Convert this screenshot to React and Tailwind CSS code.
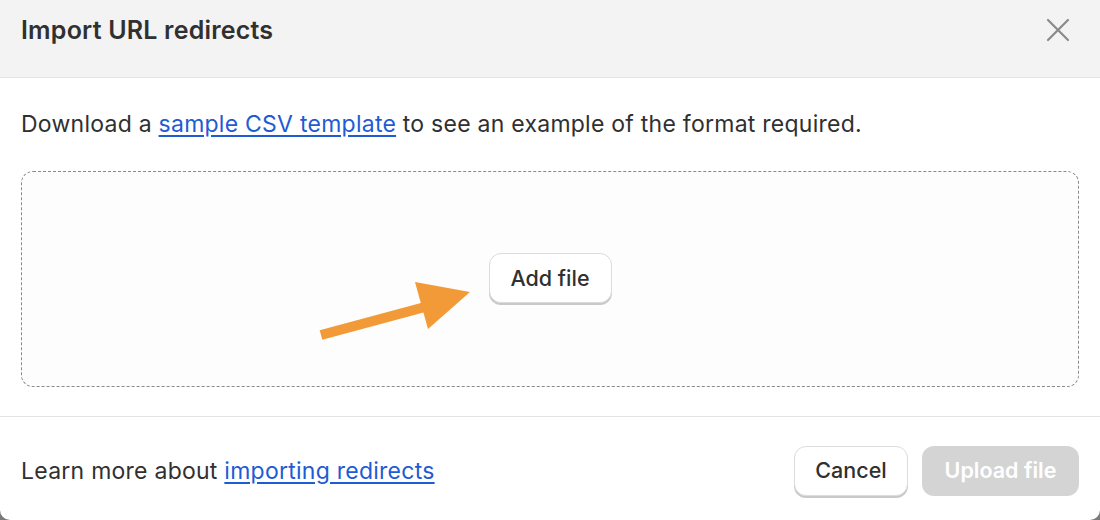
export default function App() {
  return (
    <div className="w-[1100px] h-[520px] bg-[#7a7a7a] overflow-hidden" style={{ fontFamily: "Inter, 'Noto Sans', sans-serif" }}>
      <div className="w-full h-full bg-white rounded-b-[10px] overflow-hidden flex flex-col text-[#303030]">
        <div className="h-[78px] bg-[#f3f3f3] border-b border-[#e3e3e3] flex items-start justify-between pl-[21px] pr-[28px] pt-[14px]">
          <h1 className="text-[25px] leading-[32px] font-semibold tracking-[0.2px]">Import URL redirects</h1>
          <button className="mt-[2px] text-[#8a8a8a]">
            <svg width="28" height="28" viewBox="0 0 28 28" fill="none" stroke="currentColor" strokeWidth="2.2" strokeLinecap="round">
              <path d="M4 4 L24 24 M24 4 L4 24" />
            </svg>
          </button>
        </div>
        <div className="px-[21px] pt-[31px] h-[339px] border-b border-[#e3e3e3] flex flex-col">
          <p className="text-[23px] leading-[30px] tracking-[0.25px]">
            Download a <a href="#" className="text-[#1f5bd3] underline underline-offset-[3px]">sample CSV template</a> to see an example of the format required.
          </p>
          <div className="mt-[32px] h-[216px] rounded-[12px] border border-dashed border-[#8a8a8a] bg-[#fdfdfd] relative flex items-center justify-center">
            <button className="mb-[2px] h-[50px] w-[123px] rounded-[12px] bg-white border border-[#dcdcdc] shadow-[0_2px_0_0_#c8c8c8] text-[21.5px] font-medium text-[#303030]">
              Add file
            </button>
            <svg className="absolute left-[277px] top-[110px]" width="172" height="70" viewBox="0 0 172 70">
              <line x1="22" y1="53" x2="126" y2="25" stroke="#f29a38" strokeWidth="10" />
              <polygon points="116,0 171,10 129,47" fill="#f29a38" />
            </svg>
          </div>
        </div>
        <div className="flex-1 flex items-center justify-between pl-[21px] pr-[21px] pt-[4px]">
          <p className="text-[23px] leading-[30px] tracking-[0.25px]">
            Learn more about <a href="#" className="text-[#1f5bd3] underline underline-offset-[3px]">importing redirects</a>
          </p>
          <div className="flex gap-[14px]">
            <button className="h-[50px] w-[114px] rounded-[12px] bg-white border border-[#dcdcdc] shadow-[0_2px_0_0_#c8c8c8] text-[21.5px] font-medium text-[#303030]">
              Cancel
            </button>
            <button className="h-[50px] w-[157px] rounded-[12px] bg-[#d4d4d4] text-[21.5px] font-semibold text-white">
              Upload file
            </button>
          </div>
        </div>
      </div>
    </div>
  );
}
